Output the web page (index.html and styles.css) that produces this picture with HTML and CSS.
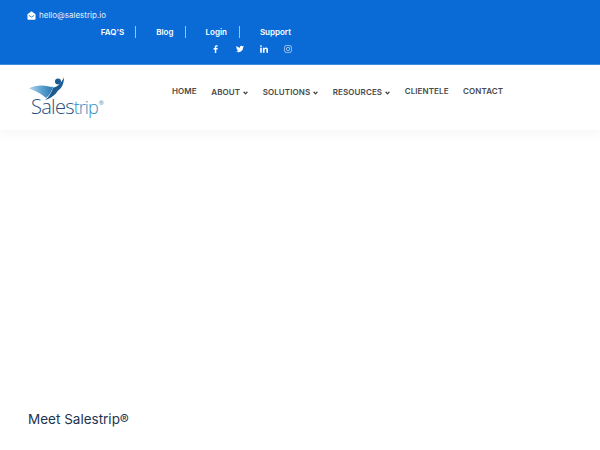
FILE: index.html
```html
<!DOCTYPE html>
<html lang="en">
<head>
<meta charset="utf-8">
<title>Salestrip</title>
<link rel="stylesheet" href="styles.css">
</head>
<body>
<header class="topbar">
  <div class="topbar-inner">
    <div class="mail">
      <svg class="mail-icon" viewBox="0 0 10 10" width="9" height="9"><path d="M5 .4 9.500 3.600V9a.8.8 0 0 1-.8.8H1.300A.8.8 0 0 1 .5 9V3.600Z" fill="#fff"/><path d="M2 4.800 5 6.800 8 4.800" fill="none" stroke="#0a6ad6" stroke-width=".9"/></svg>
      <span>hello@salestrip.io</span>
    </div>
    <nav class="links">
      <a class="link">FAQ'S</a>
      <a class="link">Blog</a>
      <a class="link wide">Login</a>
      <a class="link last">Support</a>
    </nav>
    <div class="social">
      <svg viewBox="0 0 10 12" width="8" height="8"><path d="M3.200 12V6.600H1.400V4.500h1.800V3C3.200 1.200 4.300.2 5.900.2c.8 0 1.400.1 1.600.1V2.200H6.400c-.9 0-1 .4-1 1v1.300h2.100l-.3 2.100H5.400V12Z" fill="#fff"/></svg>
      <svg viewBox="0 0 24 20" width="8" height="8"><path d="M24 2.400a10 10 0 0 1-2.800.8A5 5 0 0 0 23.300.500a9.800 9.800 0 0 1-3.100 1.200A4.900 4.900 0 0 0 11.800 6.100 14 14 0 0 1 1.700.9a4.900 4.900 0 0 0 1.500 6.600 4.900 4.900 0 0 1-2.200-.6 4.900 4.900 0 0 0 3.900 4.900 4.900 4.900 0 0 1-2.200.1 4.900 4.900 0 0 0 4.600 3.400A9.900 9.900 0 0 1 0 17.300 14 14 0 0 0 21.500 4.900 10 10 0 0 0 24 2.400Z" fill="#fff"/></svg>
      <svg viewBox="0 0 12 12" width="8" height="8"><path d="M.3 4h2.400v7.800H.3ZM1.500.2a1.400 1.400 0 1 1 0 2.800 1.400 1.400 0 0 1 0-2.800ZM4.300 4h2.300v1.100c.4-.7 1.200-1.300 2.400-1.300 2.500 0 3 1.600 3 3.800v4.200H9.600V8.100c0-.9 0-2-1.300-2s-1.500 1-1.500 2v3.700H4.300Z" fill="#fff"/></svg>
      <svg viewBox="0 0 12 12" width="8" height="8"><rect x=".7" y=".7" width="10.600" height="10.600" rx="3" fill="none" stroke="#cfe1f6" stroke-width="1.100"/><circle cx="6" cy="6" r="2.500" fill="none" stroke="#cfe1f6" stroke-width="1.100"/><circle cx="9" cy="3" r=".7" fill="#cfe1f6"/></svg>
    </div>
  </div>
</header>
<div class="mainbar">
  <div class="logo">
    <svg class="bird" viewBox="0 0 38 24" width="38" height="24">
      <defs><linearGradient id="wing" x1="0" y1="0" x2="1" y2="0"><stop offset="0" stop-color="#b5d7ec"/><stop offset=".55" stop-color="#5a9fd0"/><stop offset="1" stop-color="#2a78b4"/></linearGradient></defs>
      <path d="M1 11.500C7 8 15 8 21 9.500 23 10 24 10 25 9.500 24 14 22 18 18 21 14 17 8 14 1 11.500Z" fill="url(#wing)"/>
      <path d="M25 10.500C30 10 33 6 36 .5 36 6 34 11 30 13.500 28 17 24 21 17 23 21 20 24 15 25 10.500Z" fill="#1c5a92"/>
      <circle cx="30" cy="4.500" r="3" fill="#1c5a92"/>
    </svg>
    <div class="wordmark"><span class="sales">Sales</span><span class="trip">trip</span><sup class="reg">®</sup></div>
  </div>
  <nav class="menu">
    <a class="item flat">HOME</a>
    <a class="item">ABOUT<svg class="chev" viewBox="0 0 8 6" width="5" height="4"><path d="M1 1 4 4.400 7 1" fill="none" stroke="#444" stroke-width="2"/></svg></a>
    <a class="item">SOLUTIONS<svg class="chev" viewBox="0 0 8 6" width="5" height="4"><path d="M1 1 4 4.400 7 1" fill="none" stroke="#444" stroke-width="2"/></svg></a>
    <a class="item">RESOURCES<svg class="chev" viewBox="0 0 8 6" width="5" height="4"><path d="M1 1 4 4.400 7 1" fill="none" stroke="#444" stroke-width="2"/></svg></a>
    <a class="item flat">CLIENTELE</a>
    <a class="item flat">CONTACT</a>
  </nav>
</div>
<main class="content">
  <h2 class="headline">Meet Salestrip®</h2>
</main>
</body>
</html>
```
FILE: styles.css
```css
html, body { margin: 0; padding: 0; }
body {
  width: 600px;
  height: 450px;
  overflow: hidden;
  background: #fff;
  font-family: Inter, "Liberation Sans", sans-serif;
}
.topbar {
  height: 64px;
  background: #0a6ad6;
  border-bottom: 1px solid #3f8fe0;
  color: #fff;
}
.topbar-inner {
  width: 265px;
  margin-left: 27px;
  display: flex;
  flex-direction: column;
}
.mail {
  height: 12px;
  margin-top: 9px;
  display: flex;
  align-items: center;
  gap: 3px;
  font-size: 8px;
  line-height: 12px;
  color: #e6f0fb;
}
.mail-icon { display: block; }
.links {
  margin-top: 5px;
  height: 12px;
  display: flex;
  justify-content: flex-end;
  padding-right: 1px;
  font-size: 8px;
  font-weight: 600;
  line-height: 12px;
}
.link {
  padding-right: 11px;
  margin-right: 20px;
  border-right: 1px solid #9cc4ef;
}
.link.wide { padding-right: 12px; }
.link.last { padding-right: 0; margin-right: 0; border-right: 0; }
.social {
  margin-top: 7px;
  height: 8px;
  display: flex;
  justify-content: flex-end;
  align-items: center;
  gap: 16px;
}
.social svg { display: block; }
.mainbar {
  height: 65px;
  display: flex;
  box-shadow: 0 4px 12px rgba(0, 0, 0, .04);
}
.logo {
  width: 144px;
  margin-left: 28px;
}
.bird { display: block; margin-top: 12px; }
.wordmark {
  margin-top: -6px;
  margin-left: 3px;
  font-family: "Open Sans", sans-serif;
  font-size: 20px;
  line-height: 24px;
  white-space: nowrap;
}
.sales { font-weight: 300; color: #1d4f7f; letter-spacing: -.7px; }
.trip { font-weight: 300; color: #2f8fc4; font-size: 18px; letter-spacing: -1px; }
.reg { font-size: 6px; color: #2f8fc4; vertical-align: 9px; line-height: 0; margin-left: 1px; }
.menu {
  display: flex;
  align-items: flex-start;
  gap: 14.500px;
  padding-top: 20px;
  font-size: 8px;
  font-weight: 600;
  letter-spacing: .1px;
  line-height: 12px;
  color: #4a4a4a;
}
.item { margin-top: 1px; white-space: nowrap; }
.flat { margin-top: 0; }
.chev { margin-left: 3px; vertical-align: .5px; }
.content { padding: 280px 28px 0; }
.headline {
  margin: 0;
  font-size: 13.500px;
  line-height: 18px;
  font-weight: 400;
  color: #1c3550;
}
```
